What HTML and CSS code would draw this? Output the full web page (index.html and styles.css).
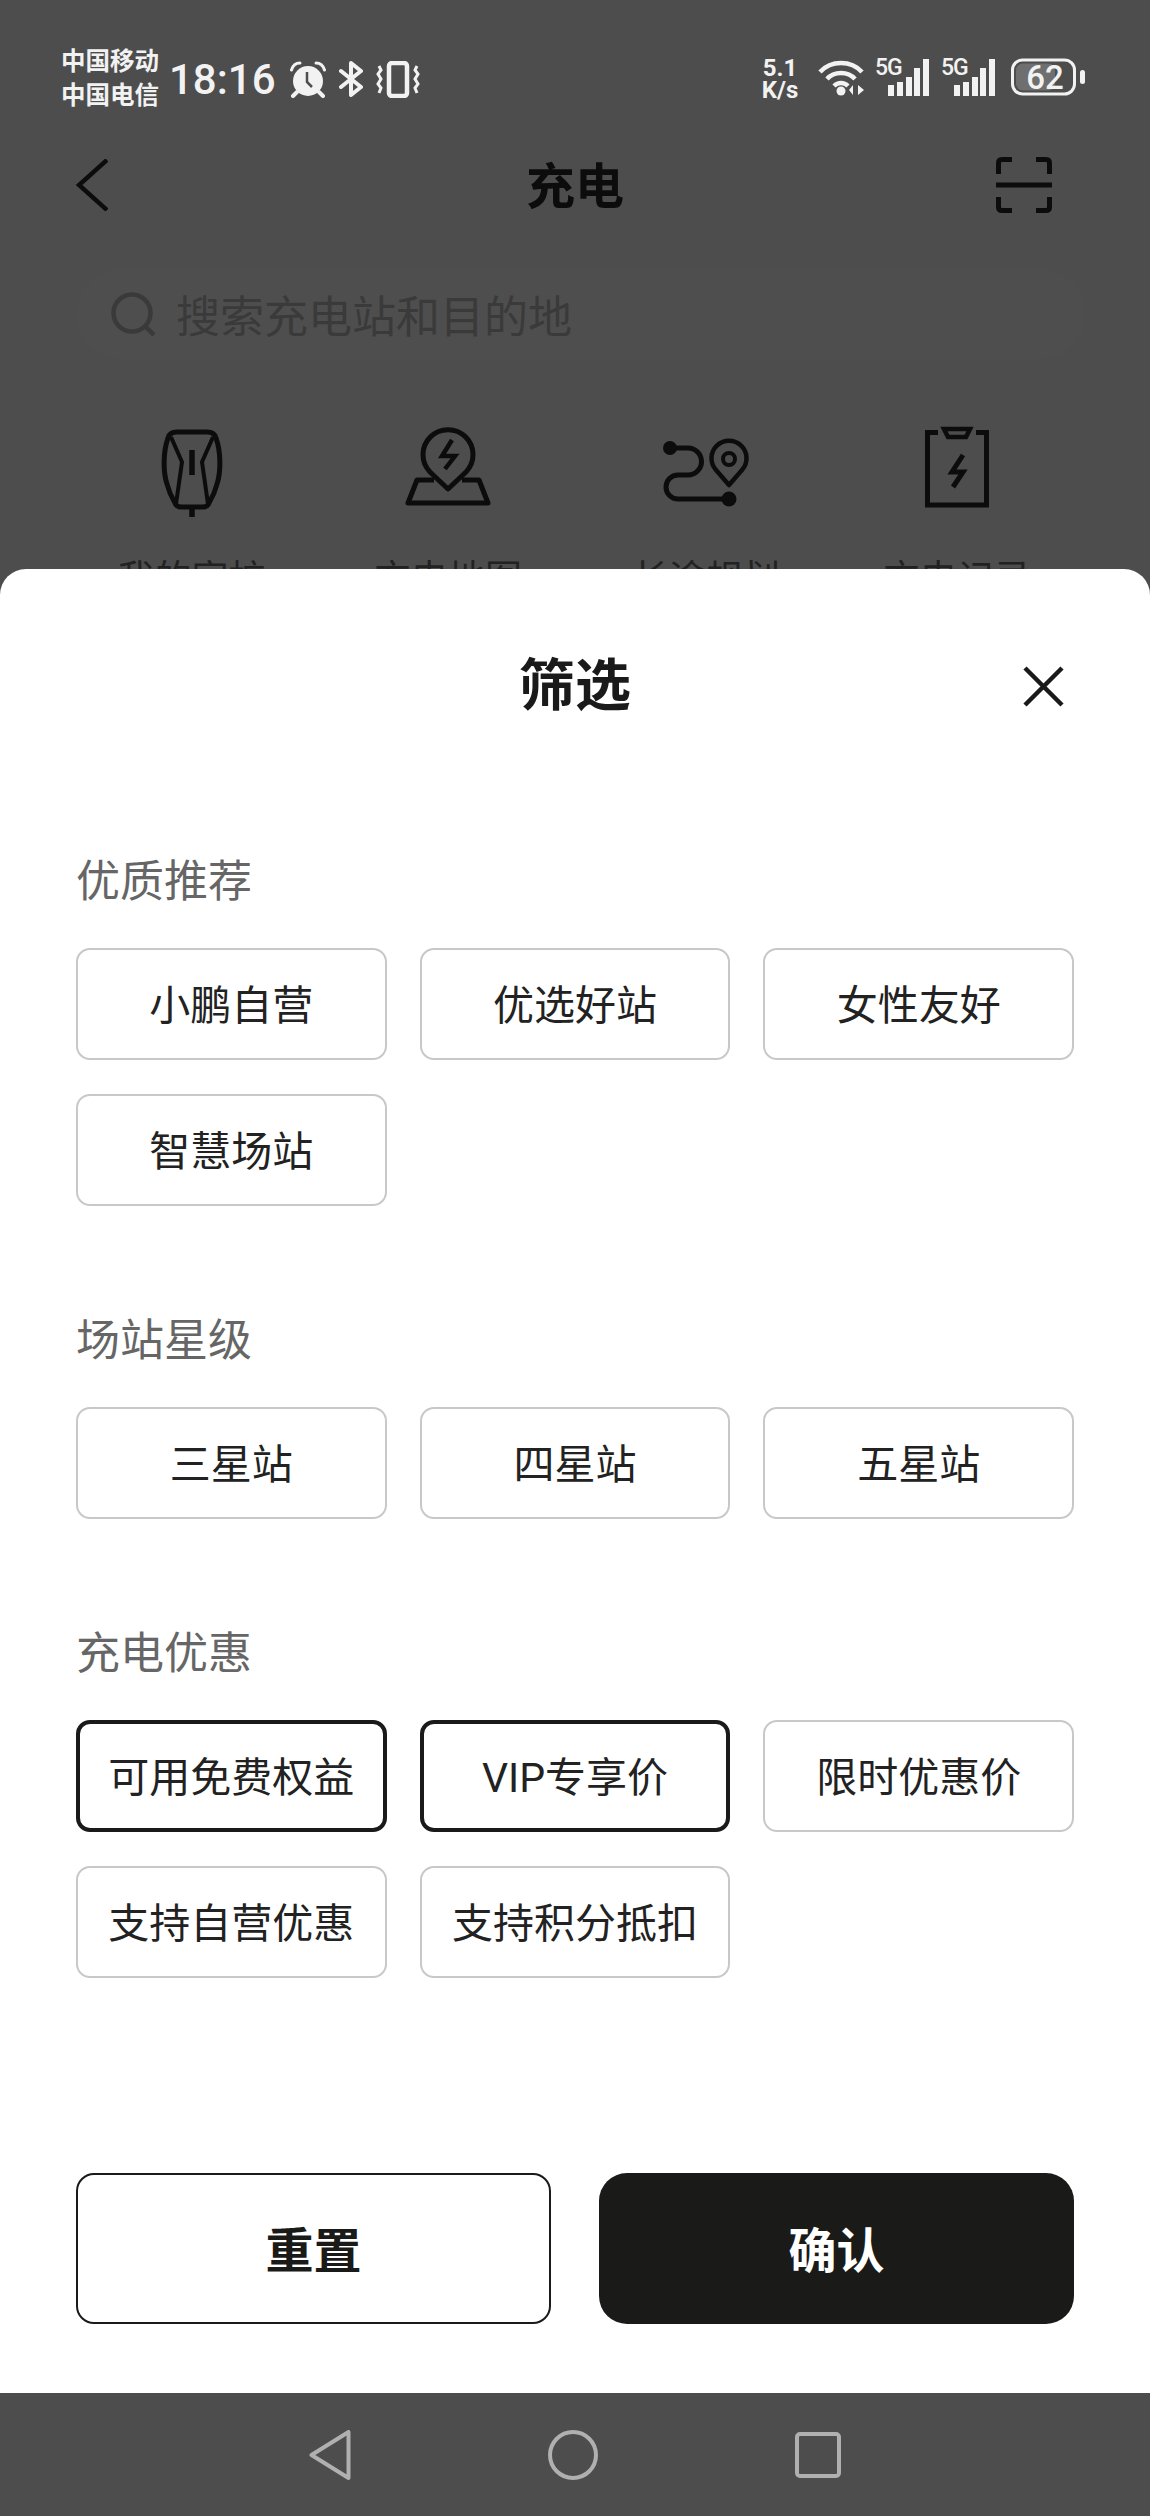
FILE: index.html
```html
<!DOCTYPE html>
<html lang="zh-CN">
<head>
    <meta charset="UTF-8">
    <meta name="viewport" content="width=device-width, initial-scale=1.0">
    <title>充电</title>
    <link rel="stylesheet" href="styles.css">
</head>
<body>
    <div class="behind">
        <div class="statusbar">
            <div class="carriers"><span>中国移动</span><span>中国电信</span></div>
            <div class="time">18:16</div>
            <svg class="st-alarm" width="36" height="37" viewBox="0 0 36 37">
                <circle cx="18" cy="20" r="15" fill="#f2f2f2"/>
                <path d="M17 11 V21 L22 26" fill="none" stroke="#4d4d4d" stroke-width="2.500"/>
                <path d="M1.500 9 C3 4 6 2 10 2 M34.500 9 C33 4 30 2 26 2" fill="none" stroke="#f2f2f2" stroke-width="3" stroke-linecap="round"/>
                <path d="M7 31 L3 35 M29 31 L33 35" stroke="#f2f2f2" stroke-width="4" stroke-linecap="round"/>
            </svg>
            <svg class="st-bt" width="25" height="36" viewBox="0 0 25 36">
                <path d="M2 10 L22 26 L12 34 V2 L22 10 L2 26" fill="none" stroke="#f2f2f2" stroke-width="4" stroke-linejoin="round" stroke-linecap="round"/>
            </svg>
            <svg class="st-vib" width="44" height="37" viewBox="0 0 44 37">
                <rect x="13" y="2" width="18" height="33" rx="3" fill="none" stroke="#f2f2f2" stroke-width="4.500"/>
                <path d="M3 5 L5 9 L2 13 L5 18 L2 23 L5 27 L3 32 M41 5 L39 9 L42 13 L39 18 L42 23 L39 27 L41 32" fill="none" stroke="#f2f2f2" stroke-width="3"/>
            </svg>
            <div class="speed"><span>5.1</span><span>K/s</span></div>
            <svg class="st-wifi" width="47" height="37" viewBox="0 0 47 37">
                <path d="M2 13 C13 1 33 1 44 13 M9 20 C16 12 30 12 37 20 M16 27 C20 23 26 23 30 27" fill="none" stroke="#f2f2f2" stroke-width="4.500"/>
                <circle cx="23" cy="32" r="4.500" fill="#f2f2f2"/>
                <path d="M35 36 V26 L31 31 Z M40 26 V36 L46 31 Z" fill="#f2f2f2"/>
            </svg>
            <div class="st-signal">
                <span class="st-5g">5G</span>
                <svg width="56" height="38" viewBox="0 0 56 38">
                    <rect x="13" y="27" width="6" height="11" fill="#f2f2f2"/>
                    <rect x="22" y="24" width="6" height="14" fill="#f2f2f2"/>
                    <rect x="31" y="19" width="6" height="19" fill="#f2f2f2"/>
                    <rect x="39" y="10" width="6" height="28" fill="#f2f2f2"/>
                    <rect x="48" y="1" width="6" height="37" fill="#f2f2f2"/>
                </svg>
            </div>
            <div class="st-signal">
                <span class="st-5g">5G</span>
                <svg width="56" height="38" viewBox="0 0 56 38">
                    <rect x="13" y="27" width="6" height="11" fill="#f2f2f2"/>
                    <rect x="22" y="24" width="6" height="14" fill="#f2f2f2"/>
                    <rect x="31" y="19" width="6" height="19" fill="#f2f2f2"/>
                    <rect x="39" y="10" width="6" height="28" fill="#f2f2f2"/>
                    <rect x="48" y="1" width="6" height="37" fill="#f2f2f2"/>
                </svg>
            </div>
            <svg class="st-battery" width="75" height="38" viewBox="0 0 75 38">
                <rect x="1.500" y="2" width="62" height="34" rx="10" fill="none" stroke="#f2f2f2" stroke-width="3"/>
                <rect x="5" y="5.500" width="39" height="27" rx="7" fill="#6f6f6f"/>
                <text x="34" y="30.500" text-anchor="middle" class="st-level">62</text>
                <rect x="69" y="12" width="5" height="14" rx="2.500" fill="#f2f2f2"/>
            </svg>
        </div>

        <div class="header">
            <svg class="back" width="32" height="52" viewBox="0 0 32 52">
                <path d="M31 1 L3 26 L31 51" fill="none" stroke="#0c0c0c" stroke-width="4.500"/>
            </svg>
            <div class="header-title">充电</div>
            <svg class="scan" width="56" height="56" viewBox="0 0 56 56">
                <path d="M16 2.500 H6 Q2.500 2.500 2.500 6 V17 M40 2.500 H50 Q53.500 2.500 53.500 6 V17 M16 53.500 H6 Q2.500 53.500 2.500 50 V40 M40 53.500 H50 Q53.500 53.500 53.500 50 V40 M0 28 H56" fill="none" stroke="#0c0c0c" stroke-width="5"/>
            </svg>
        </div>

        <div class="search">
            <svg width="45" height="45" viewBox="0 0 45 45">
                <circle cx="21" cy="21" r="18.500" fill="none" stroke="#3a3a3a" stroke-width="4.500"/>
                <path d="M34 34 L43 43" stroke="#3a3a3a" stroke-width="4.500"/>
            </svg>
            <span>搜索充电站和目的地</span>
        </div>

        <div class="shortcuts">
            <div class="shortcut">
                <svg width="100" height="100" viewBox="0 0 100 100">
                    <path d="M35 12 H65 C70 12 73 14 74 18 C79 32 79 52 75 64 C73 72 70 78 67 83 C66 86 64 87 61 87 H39 C36 87 34 86 33 83 C30 78 27 72 25 64 C21 52 21 32 26 18 C27 14 30 12 35 12 Z" fill="none" stroke="#0c0c0c" stroke-width="5"/>
                    <path d="M29 17 L40 42 L34 84 M71 17 L60 42 L66 84" fill="none" stroke="#0c0c0c" stroke-width="4"/>
                    <path d="M50 30 V55 M50 87 V97" stroke="#0c0c0c" stroke-width="5.500"/>
                </svg>
                <span>我的家桩</span>
            </div>
            <div class="shortcut">
                <svg width="100" height="100" viewBox="0 0 100 100">
                    <path d="M50 69 L32 52 A25 25 0 1 1 68 52 Z" fill="none" stroke="#0c0c0c" stroke-width="5" stroke-linejoin="round"/>
                    <path d="M36 60 H19 L10 83 H90 L81 60 H64" fill="none" stroke="#0c0c0c" stroke-width="5" stroke-linejoin="round"/>
                    <path d="M54 20 L44 36 H57 L47 49" fill="none" stroke="#0c0c0c" stroke-width="4.500"/>
                </svg>
                <span>充电地图</span>
            </div>
            <div class="shortcut">
                <svg width="100" height="100" viewBox="0 0 100 100">
                    <path d="M14 28 H32 A13.500 13.500 0 0 1 32 55 H22 A12 12 0 0 0 22 79 H73" fill="none" stroke="#0c0c0c" stroke-width="5"/>
                    <circle cx="14" cy="28" r="7" fill="#0c0c0c"/>
                    <circle cx="73" cy="79" r="7.500" fill="#0c0c0c"/>
                    <path d="M73 65 L60 50 A17.500 17.500 0 1 1 86 50 Z" fill="none" stroke="#0c0c0c" stroke-width="4.500" stroke-linejoin="round"/>
                    <circle cx="73" cy="39" r="6" fill="none" stroke="#0c0c0c" stroke-width="4"/>
                </svg>
                <span>长途规划</span>
            </div>
            <div class="shortcut">
                <svg width="100" height="100" viewBox="0 0 100 100">
                    <path d="M31 12.500 H20.500 V85 H79.500 V12.500 H69" fill="none" stroke="#0c0c0c" stroke-width="5"/>
                    <path d="M37 9 H63 L59 17 H41 Z" fill="none" stroke="#0c0c0c" stroke-width="4.500"/>
                    <path d="M56 35 L45 52 H56 L46 67" fill="none" stroke="#0c0c0c" stroke-width="5"/>
                </svg>
                <span>充电记录</span>
            </div>
        </div>
    </div>

    <div class="sheet">
        <div class="sheet-head">
            <span></span>
            <div class="sheet-title">筛选</div>
            <svg class="close" width="41" height="41" viewBox="0 0 41 41">
                <path d="M2 2 L39 39 M39 2 L2 39" stroke="#1a1a1a" stroke-width="4.500"/>
            </svg>
        </div>

        <div class="group">
            <div class="group-label">优质推荐</div>
            <div class="chips">
                <div class="chip">小鹏自营</div>
                <div class="chip">优选好站</div>
                <div class="chip">女性友好</div>
                <div class="chip">智慧场站</div>
            </div>
        </div>

        <div class="group">
            <div class="group-label">场站星级</div>
            <div class="chips">
                <div class="chip">三星站</div>
                <div class="chip">四星站</div>
                <div class="chip">五星站</div>
            </div>
        </div>

        <div class="group">
            <div class="group-label">充电优惠</div>
            <div class="chips">
                <div class="chip active">可用免费权益</div>
                <div class="chip active">VIP专享价</div>
                <div class="chip">限时优惠价</div>
                <div class="chip">支持自营优惠</div>
                <div class="chip">支持积分抵扣</div>
            </div>
        </div>

        <div class="sheet-foot">
            <button class="btn btn-reset">重置</button>
            <button class="btn btn-ok">确认</button>
        </div>
    </div>

    <div class="sysnav">
        <svg width="42" height="50" viewBox="0 0 42 50">
            <path d="M39.500 2 V48 L2.500 25 Z" fill="none" stroke="#b0b0b0" stroke-width="4" stroke-linejoin="round"/>
        </svg>
        <svg width="50" height="50" viewBox="0 0 50 50">
            <circle cx="25" cy="25" r="23" fill="none" stroke="#b0b0b0" stroke-width="4"/>
        </svg>
        <svg width="46" height="46" viewBox="0 0 46 46">
            <rect x="2" y="2" width="42" height="42" rx="3" fill="none" stroke="#b0b0b0" stroke-width="4"/>
        </svg>
    </div>
</body>
</html>
```

FILE: styles.css
```css
* {
    margin: 0;
    padding: 0;
    box-sizing: border-box;
    font-family: Roboto, "Noto Sans CJK SC", sans-serif;
}
body {
    display: flex;
    flex-direction: column;
    width: 1150px;
    height: 2516px;
    overflow: hidden;
    background: #4d4d4d;
}

/* dimmed page behind the sheet */
.behind {
    height: 569px;
    overflow: hidden;
    flex-shrink: 0;
}
.statusbar {
    display: flex;
    align-items: center;
    height: 68px;
    margin-top: 45px;
    padding-left: 61px;
    color: #f2f2f2;
}
.carriers {
    display: flex;
    flex-direction: column;
    font-size: 24.500px;
    line-height: 34px;
    font-weight: 700;
    width: 108px;
}
.time {
    font-size: 42px;
    font-weight: 500;
    width: 121px;
}
.st-alarm {
    margin-right: 13px;
}
.st-bt {
    margin-right: 12px;
}
.speed {
    display: flex;
    flex-direction: column;
    align-items: center;
    width: 44px;
    margin-left: 338px;
    margin-right: 16px;
    font-size: 24px;
    line-height: 22px;
    font-weight: 700;
}
.st-wifi {
    margin-right: 10px;
    margin-bottom: 4px;
}
.st-signal {
    display: grid;
    margin-right: 10px;
    margin-bottom: 4px;
}
.st-signal svg,
.st-5g {
    grid-area: 1 / 1;
}
.st-5g {
    align-self: start;
    font-size: 23px;
    line-height: 20px;
    font-weight: 500;
    letter-spacing: -1px;
}
.st-battery {
    margin-left: 4px;
    margin-bottom: 4px;
}
.st-level {
    font-size: 33px;
    font-weight: 500;
    fill: #f2f2f2;
}
.header {
    display: grid;
    grid-template-columns: 1fr auto 1fr;
    align-items: center;
    height: 144px;
    padding: 0 76px;
}
.header-title {
    font-size: 49px;
    font-weight: 700;
    color: #0c0c0c;
    padding-bottom: 6px;
}
.scan {
    justify-self: end;
    margin-right: 22px;
}
.search {
    display: flex;
    align-items: center;
    gap: 20px;
    height: 90px;
    margin: 12px 64px 0 76px;
    padding-left: 35px;
    border-radius: 45px;
    background: #4e4e4e;
    color: #3a3a3a;
    font-size: 44px;
}
.shortcuts {
    display: grid;
    grid-template-columns: 255px 258px 258px 244px;
    padding: 61px 0 0 64px;
}
.shortcut {
    display: flex;
    flex-direction: column;
    align-items: center;
    gap: 35px;
    font-size: 37px;
    line-height: 50px;
    color: #222;
}

/* filter sheet */
.sheet {
    display: flex;
    flex-direction: column;
    flex: 1;
    padding: 64px 76px 69px;
    background: #fff;
    border-radius: 26px 26px 0 0;
}
.sheet-head {
    display: grid;
    grid-template-columns: 1fr auto 1fr;
    align-items: center;
    height: 100px;
    margin-bottom: 116px;
}
.sheet-title {
    font-size: 56px;
    font-weight: 700;
    color: #1a1a1a;
    padding-bottom: 6px;
}
.close {
    justify-self: end;
    margin: 6px 10px 0 0;
}
.group {
    margin-bottom: 102px;
}
.group-label {
    font-size: 44px;
    line-height: 60px;
    color: #666;
    margin-top: 3px;
    margin-bottom: 36px;
}
.chips {
    display: grid;
    grid-template-columns: repeat(3, 1fr);
    gap: 34px 33px;
}
.chip {
    display: flex;
    align-items: center;
    justify-content: center;
    height: 112px;
    padding-bottom: 5px;
    border: 2px solid #c8c8c8;
    border-radius: 14px;
    font-size: 41px;
    color: #222;
}
.chip.active {
    border: 4px solid #1a1a1a;
}
.sheet-foot {
    display: grid;
    grid-template-columns: 1fr 1fr;
    gap: 48px;
    margin-top: auto;
}
.btn {
    height: 151px;
    padding-bottom: 4px;
    font-size: 48px;
    font-weight: 700;
    cursor: pointer;
}
.btn-reset {
    background: #fff;
    color: #1a1a18;
    border: 2px solid #1a1a18;
    border-radius: 18px;
}
.btn-ok {
    background: #1a1a18;
    color: #fff;
    border: none;
    border-radius: 28px;
}

/* system navigation */
.sysnav {
    display: flex;
    align-items: center;
    justify-content: center;
    gap: 197px;
    height: 123px;
    flex-shrink: 0;
}
```
